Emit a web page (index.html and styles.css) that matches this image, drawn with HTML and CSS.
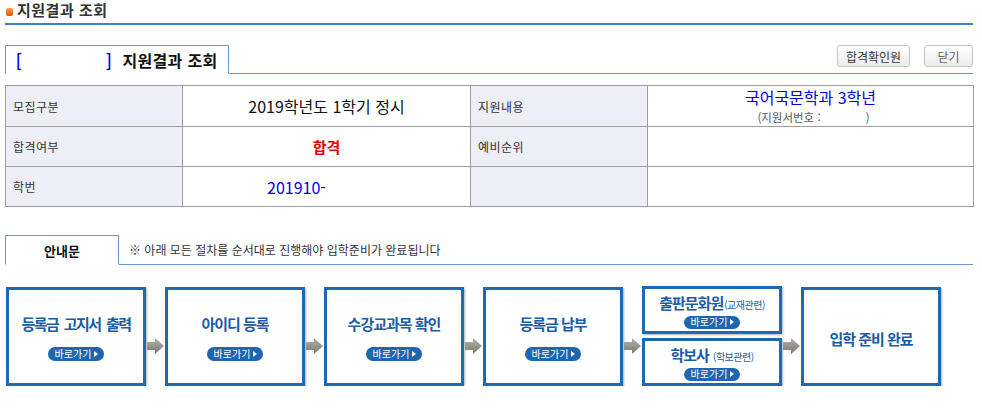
FILE: index.html
```html
<!DOCTYPE html>
<html lang="ko">
<head>
    <meta charset="UTF-8">
    <title>지원결과 조회</title>
    <link rel="stylesheet" href="styles.css">
</head>
<body>
    <div class="wrap">
        <h1 class="page-title"><span class="bullet"></span>지원결과 조회</h1>

        <div class="tabbar">
            <div class="tab tab-main">
                <span class="bracket">[</span><span class="name-blank"></span><span class="bracket">]</span>
                <span class="tab-text">지원결과 조회</span>
            </div>
            <div class="btns">
                <button class="btn btn-pass">합격확인원</button>
                <button class="btn btn-close">닫기</button>
            </div>
        </div>

        <table class="result">
            <colgroup>
                <col class="c-label">
                <col class="c-value">
                <col class="c-label">
                <col class="c-wide">
            </colgroup>
            <tr>
                <th>모집구분</th>
                <td class="val">2019학년도 1학기 정시</td>
                <th>지원내용</th>
                <td class="val">
                    <div class="dept">국어국문학과 3학년</div>
                    <div class="appno">(지원서번호 :&nbsp;&nbsp;&nbsp;&nbsp;&nbsp;&nbsp;&nbsp;&nbsp;&nbsp;&nbsp;&nbsp;&nbsp;&nbsp;&nbsp;)</div>
                </td>
            </tr>
            <tr>
                <th>합격여부</th>
                <td class="val pass">합격</td>
                <th>예비순위</th>
                <td></td>
            </tr>
            <tr>
                <th>학번</th>
                <td class="val stuno">201910-</td>
                <th></th>
                <td></td>
            </tr>
        </table>

        <div class="tabbar tabbar-guide">
            <div class="tab tab-guide">안내문</div>
            <p class="notice">※ 아래 모든 절차를 순서대로 진행해야 입학준비가 완료됩니다</p>
        </div>

        <div class="steps">
            <div class="step">
                <div class="step-title tight">등록금 고지서 출력</div>
                <a class="go" href="#">바로가기<i></i></a>
            </div>
            <div class="arrow"><svg width="17" height="16" viewBox="0 0 17 16"><defs><linearGradient id="ag" x1="0" y1="0" x2="0" y2="1"><stop offset="0" stop-color="#b4b2a9"/><stop offset="1" stop-color="#7a786f"/></linearGradient></defs><path d="M0 4h8V0l9 8-9 8v-4H0z" fill="url(#ag)"/></svg></div>
            <div class="step">
                <div class="step-title">아이디 등록</div>
                <a class="go" href="#">바로가기<i></i></a>
            </div>
            <div class="arrow"><svg width="17" height="16" viewBox="0 0 17 16"><path d="M0 4h8V0l9 8-9 8v-4H0z" fill="url(#ag)"/></svg></div>
            <div class="step">
                <div class="step-title">수강교과목 확인</div>
                <a class="go" href="#">바로가기<i></i></a>
            </div>
            <div class="arrow"><svg width="17" height="16" viewBox="0 0 17 16"><path d="M0 4h8V0l9 8-9 8v-4H0z" fill="url(#ag)"/></svg></div>
            <div class="step">
                <div class="step-title">등록금 납부</div>
                <a class="go" href="#">바로가기<i></i></a>
            </div>
            <div class="arrow"><svg width="17" height="16" viewBox="0 0 17 16"><path d="M0 4h8V0l9 8-9 8v-4H0z" fill="url(#ag)"/></svg></div>
            <div class="step-stack">
                <div class="step step-sm">
                    <div class="step-title">출판문화원<small>(교재관련)</small></div>
                    <a class="go" href="#">바로가기<i></i></a>
                </div>
                <div class="step step-sm">
                    <div class="step-title">학보사 <small>(학보관련)</small></div>
                    <a class="go" href="#">바로가기<i></i></a>
                </div>
            </div>
            <div class="arrow"><svg width="17" height="16" viewBox="0 0 17 16"><path d="M0 4h8V0l9 8-9 8v-4H0z" fill="url(#ag)"/></svg></div>
            <div class="step">
                <div class="step-title">입학 준비 완료</div>
            </div>
        </div>
    </div>
</body>
</html>
```

FILE: styles.css
```css
* {
    box-sizing: border-box;
}
body {
    margin: 0;
    background: #fff;
    color: #333;
    font-family: "Noto Sans CJK KR", "Noto Sans", sans-serif;
    font-size: 12px;
}
.wrap {
    width: 968px;
    margin-left: 5px;
}
/* Page title */
.page-title {
    display: flex;
    align-items: center;
    height: 25px;
    margin: 0;
    padding-bottom: 3px;
    border-bottom: 2px solid #3f80c8;
    font-size: 15px;
    font-weight: bold;
    line-height: 20px;
    letter-spacing: 0.5px;
    color: #333;
}
.bullet {
    width: 7px;
    height: 8px;
    margin: 3px 4px 0 1px;
    border-radius: 2px;
    background: linear-gradient(#f8a050, #d9560e);
}
/* Tabs */
.tabbar {
    display: flex;
    align-items: flex-start;
    height: 29px;
    margin-top: 20px;
    border-bottom: 1px solid #6c98cd;
}
.tab {
    display: flex;
    align-items: center;
    background: #fff;
    border: 1px solid #6c98cd;
    border-bottom: 1px solid #fff;
}
.tab-main {
    width: 224px;
    height: 29px;
    padding-left: 10px;
}
.bracket {
    color: #0000ff;
    font-family: "Liberation Sans", sans-serif;
    font-size: 19px;
    line-height: 20px;
}
.name-blank {
    width: 85px;
}
.tab-text {
    margin-left: 11px;
    font-size: 16px;
    font-weight: bold;
    letter-spacing: 0.3px;
    color: #111;
}
.btns {
    display: flex;
    gap: 14px;
    margin-left: auto;
}
.btn {
    height: 22px;
    padding: 0;
    border: 1px solid #c4c4c4;
    border-radius: 3px;
    background: linear-gradient(#ffffff, #ececec);
    font-family: inherit;
    font-size: 12px;
    color: #333;
    cursor: pointer;
}
.btn-pass {
    width: 73px;
}
.btn-close {
    width: 49px;
    color: #666;
}
/* Result table */
.result {
    width: 968px;
    margin-top: 11px;
    border-collapse: collapse;
    table-layout: fixed;
}
.c-label {
    width: 177px;
}
.c-value {
    width: 288px;
}
.c-wide {
    width: 326px;
}
.result th,
.result td {
    height: 40px;
    padding: 0;
    border: 1px solid #9c9c9c;
}
.result th {
    padding-left: 7px;
    background: #eeeef6;
    text-align: left;
    font-weight: normal;
    font-size: 12px;
    letter-spacing: 0.5px;
    color: #333;
}
.result .val {
    text-align: center;
    font-size: 16px;
    color: #111;
}
.result .pass {
    font-size: 15px;
    font-weight: bold;
    color: #ee0000;
}
.result .stuno {
    padding-left: 84px;
    text-align: left;
    color: #0000ee;
}
.dept {
    line-height: 23px;
    color: #0000ee;
}
.appno {
    padding-left: 6px;
    font-size: 11.5px;
    line-height: 17px;
    color: #555;
}
/* Guide */
.tabbar-guide {
    height: 30px;
    margin-top: 28px;
    align-items: stretch;
}
.tab-guide {
    justify-content: center;
    width: 114px;
    height: 30px;
    font-size: 13px;
    font-weight: bold;
    color: #111;
}
.notice {
    margin: 0 0 0 10px;
    align-self: center;
    font-size: 12px;
    color: #333;
}
/* Steps */
.steps {
    display: flex;
    align-items: center;
    margin-top: 21px;
    padding-left: 1px;
}
.step {
    display: flex;
    flex-direction: column;
    align-items: center;
    justify-content: center;
    width: 140px;
    height: 99px;
    padding-top: 4px;
    border: 3px solid #1d69b3;
    box-shadow: 1px 1px 2px rgba(0, 0, 0, 0.3);
    background: #fff;
}
.step-stack {
    display: flex;
    flex-direction: column;
    gap: 4px;
}
.step-sm {
    height: 48px;
    padding-top: 2px;
}
.step-title {
    font-size: 15px;
    font-weight: bold;
    line-height: 17px;
    letter-spacing: -1px;
    color: #1a5ca6;
}
.step-title.tight {
    letter-spacing: -1.6px;
    word-spacing: 3px;
}
.step-title small {
    margin-left: 1px;
    font-size: 10px;
    font-weight: normal;
    letter-spacing: -0.5px;
}
.step .go {
    margin-top: 15px;
}
.step-sm .go {
    margin-top: 3px;
    height: 13px;
}
.go {
    display: inline-flex;
    align-items: center;
    gap: 3px;
    height: 14px;
    padding: 0 6px 0 7px;
    border-radius: 7px;
    background: #1f66b0;
    color: #fff;
    font-size: 10px;
    line-height: 14px;
    text-decoration: none;
}
.go i {
    width: 0;
    height: 0;
    border-top: 3px solid transparent;
    border-bottom: 3px solid transparent;
    border-left: 4px solid #fff;
}
.arrow {
    display: flex;
    justify-content: center;
    width: 19px;
    margin-top: 20px;
}
```
